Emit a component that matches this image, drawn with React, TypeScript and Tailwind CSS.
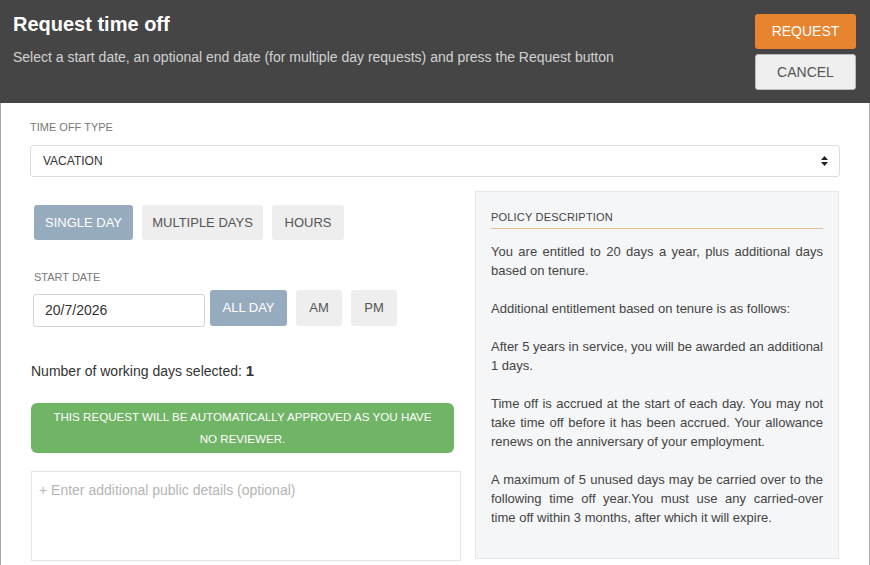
const POLICY = [
  'You are entitled to 20 days a year, plus additional days based on tenure.',
  'Additional entitlement based on tenure is as follows:',
  'After 5 years in service, you will be awarded an additional 1 days.',
  'Time off is accrued at the start of each day. You may not take time off before it has been accrued. Your allowance renews on the anniversary of your employment.',
  'A maximum of 5 unused days may be carried over to the following time off year.You must use any carried-over time off within 3 months, after which it will expire.',
];

const font = { fontFamily: '"Liberation Sans", Arial, sans-serif' };

function ToggleButton({ label, active, className = '' }: { label: string; active?: boolean; className?: string }) {
  return (
    <button
      type="button"
      className={`flex items-center justify-center rounded-[3px] text-[13px] uppercase ${
        active ? 'bg-[#97abbf] text-white' : 'bg-[#eeeeee] text-[#555]'
      } ${className}`}
    >
      {label}
    </button>
  );
}

export default function App() {
  return (
    <div style={font} className="h-[565px] w-[870px] overflow-hidden bg-white">
      {/* Header */}
      <div className="flex h-[103px] justify-between bg-[#454545] pl-[13px] pr-[14px]">
        <div>
          <h1 className="mt-[11px] text-[20px] font-bold leading-[26px] text-white">Request time off</h1>
          <p className="mt-[12px] text-[14px] leading-[16px] text-[#d2d2d2]">
            Select a start date, an optional end date (for multiple day requests) and press the Request button
          </p>
        </div>
        <div className="mt-[14px] flex w-[101px] flex-col gap-[5px]">
          <button type="button" className="h-[35px] rounded-[3px] bg-[#e8832f] text-[14px] text-white">
            REQUEST
          </button>
          <button
            type="button"
            className="h-[36px] rounded-[3px] border border-[#bbb] bg-[#efefef] text-[14px] text-[#555]"
          >
            CANCEL
          </button>
        </div>
      </div>

      {/* Body */}
      <div className="h-[462px] border-l border-r border-[#a9a9a9] pl-[29px] pr-[29px]">
        <div className="pt-[18px] text-[11px] leading-[13px] text-[#777]">TIME OFF TYPE</div>
        <div className="mt-[11px] flex h-[32px] w-[810px] items-center justify-between rounded-[3px] border border-[#dedede] pl-[12px] pr-[10px] text-[12px] text-[#333]">
          <span>VACATION</span>
          <svg width="9" height="12" viewBox="0 0 9 12">
            <path d="M4.5 1 L8 5 H1 Z" fill="#222" />
            <path d="M4.5 11 L8 7 H1 Z" fill="#222" />
          </svg>
        </div>

        <div className="mt-[14px] flex">
          {/* Left column */}
          <div className="w-[431px] shrink-0">
            <div className="ml-[4px] mt-[14px] flex gap-[9px]">
              <ToggleButton label="Single Day" active className="h-[35px] w-[99px]" />
              <ToggleButton label="Multiple Days" className="h-[35px] w-[121px]" />
              <ToggleButton label="Hours" className="h-[35px] w-[72px]" />
            </div>

            <div className="ml-[4px] mt-[31px] text-[11px] leading-[13px] text-[#777]">START DATE</div>
            <div className="ml-[3px] mt-[6px] flex items-start gap-[5px]">
              <div className="mt-[4px] flex h-[33px] w-[172px] items-center rounded-[3px] border border-[#d4d4d4] pl-[11px] text-[14px] text-[#333]">
                20/7/2026
              </div>
              <ToggleButton label="All Day" active className="h-[36px] w-[77px]" />
              <ToggleButton label="AM" className="ml-[4px] h-[36px] w-[46px]" />
              <ToggleButton label="PM" className="ml-[4px] h-[36px] w-[46px]" />
            </div>

            <div className="ml-[1px] mt-[36px] text-[14px] leading-[16px] text-[#333]">
              Number of working days selected: <span className="text-[15px] font-bold">1</span>
            </div>

            <div className="ml-[1px] mt-[24px] flex h-[50px] w-[423px] flex-col items-center justify-center rounded-[6px] bg-[#70b466] text-center text-[11.6px] leading-[22px] text-white">
              <span>THIS REQUEST WILL BE AUTOMATICALLY APPROVED AS YOU HAVE</span>
              <span>NO REVIEWER.</span>
            </div>

            <div className="ml-[1px] mt-[18px] h-[90px] w-[430px] border border-[#e4e4e4] pl-[7px] pt-[10px] text-[14px] leading-[16px] text-[#b5b5b5]">
              + Enter additional public details (optional)
            </div>
          </div>

          {/* Policy panel */}
          <div className="ml-[14px] h-[368px] w-[364px] shrink-0 border border-[#e6e7ea] bg-[#f5f6f8] px-[15px] pt-[19px]">
            <div className="border-b border-[#e2c088] pb-[4px] text-[11px] leading-[13px] tracking-[0.2px] text-[#444]">
              POLICY DESCRIPTION
            </div>
            <div className="mt-[13px] flex flex-col gap-[19px] text-[13px] leading-[19px] text-[#444]">
              {POLICY.map((p) => (
                <p key={p} className="text-justify">
                  {p}
                </p>
              ))}
            </div>
          </div>
        </div>
      </div>
    </div>
  );
}
